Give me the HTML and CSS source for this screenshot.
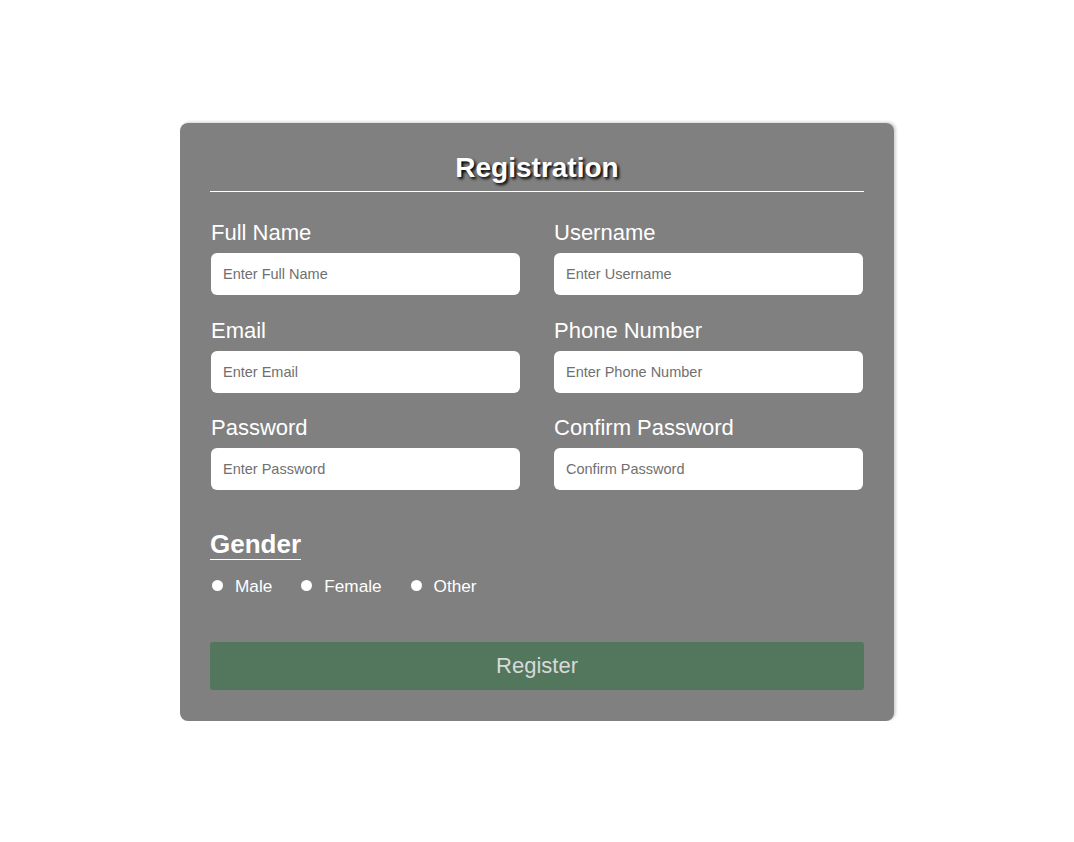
FILE: index.html
```html
<!DOCTYPE html>
<html lang="en">
<head>
<meta charset="utf-8">
<title>Registration</title>
<link rel="stylesheet" href="styles.css">
</head>
<body>
<div class="card">
  <h2 class="title">Registration</h2>
  <form class="form">
    <div class="grid">
      <div class="field">
        <label class="label">Full Name</label>
        <input class="input" type="text" placeholder="Enter Full Name">
      </div>
      <div class="field">
        <label class="label">Username</label>
        <input class="input" type="text" placeholder="Enter Username">
      </div>
      <div class="field">
        <label class="label">Email</label>
        <input class="input" type="text" placeholder="Enter Email">
      </div>
      <div class="field">
        <label class="label">Phone Number</label>
        <input class="input" type="text" placeholder="Enter Phone Number">
      </div>
      <div class="field">
        <label class="label">Password</label>
        <input class="input" type="text" placeholder="Enter Password">
      </div>
      <div class="field">
        <label class="label">Confirm Password</label>
        <input class="input" type="text" placeholder="Confirm Password">
      </div>
    </div>
    <div class="gender">
      <span class="gender-title">Gender</span>
      <div class="options">
        <label class="option"><span class="dot"></span>Male</label>
        <label class="option"><span class="dot"></span>Female</label>
        <label class="option"><span class="dot"></span>Other</label>
      </div>
    </div>
    <button class="button" type="button">Register</button>
  </form>
</div>
</body>
</html>
```
FILE: styles.css
```css
* { box-sizing: border-box; }
body {
  margin: 0;
  background: #ffffff;
  font-family: "Liberation Sans", Arial, sans-serif;
}
.card {
  width: 714px;
  margin: 123px auto 0;
  padding: 30px 30px 31px;
  background: #808080;
  border-radius: 8px;
  box-shadow: 2px -1px 3px rgba(0, 0, 0, 0.18);
  color: #ffffff;
}
.title {
  margin: 0;
  font-size: 28px;
  line-height: 28px;
  font-weight: bold;
  text-align: center;
  padding-top: 1px;
  padding-bottom: 9px;
  border-bottom: 1px solid #ffffff;
  text-shadow: 2px 2px 3px #000000;
}
.form { margin: 0; }
.grid {
  display: grid;
  grid-template-columns: 310px 310px;
  column-gap: 34px;
  row-gap: 22.5px;
  margin-top: 28px;
}
.field {
  display: flex;
  flex-direction: column;
}
.field:nth-child(odd) { padding-left: 1px; }
.label {
  font-size: 22px;
  line-height: 26px;
}
.input {
  margin-top: 7px;
  height: 42px;
  width: 309px;
  border: none;
  border-radius: 6px;
  background: #ffffff;
  padding: 0 12px;
  font-family: "Liberation Sans", Arial, sans-serif;
  font-size: 14.5px;
  color: #333;
  outline: none;
}
.input::placeholder { color: #707070; }
.gender {
  margin-top: 40px;
}
.gender-title {
  display: inline-block;
  font-size: 26px;
  font-weight: bold;
  line-height: 29px;
  border-bottom: 1px solid #ffffff;
}
.options {
  display: flex;
  gap: 27px;
  margin-top: 16px;
  height: 20px;
}
.option {
  display: flex;
  align-items: center;
  font-size: 17.2px;
  line-height: 20px;
}
.dot {
  width: 11px;
  height: 11px;
  border-radius: 50%;
  background: #ffffff;
  margin: 0 12px 0 2px;
  position: relative;
  top: -1px;
}
.button {
  display: block;
  width: 100%;
  height: 48px;
  margin-top: 46px;
  border: none;
  border-radius: 3px;
  background: #52775c;
  color: #d9d9d9;
  font-family: "Liberation Sans", Arial, sans-serif;
  font-size: 22px;
}
```
